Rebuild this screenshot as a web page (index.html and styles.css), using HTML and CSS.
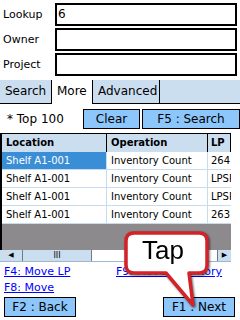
FILE: index.html
```html
<!DOCTYPE html>
<html lang="en">
<head>
    <meta charset="UTF-8">
    <meta name="viewport" content="width=device-width, initial-scale=1.0">
    <title>Lookup - More</title>
    <link rel="stylesheet" href="styles.css">
</head>
<body>
    <div class="screen">
        <div class="fields">
            <label>Lookup</label><div class="box">6</div>
            <label>Owner</label><div class="box"></div>
            <label>Project</label><div class="box"></div>
        </div>

        <div class="tabs">
            <div class="tab t-search">Search</div>
            <div class="tab t-more active">More</div>
            <div class="tab t-adv">Advanced</div>
            <div class="tab-fill"></div>
        </div>

        <div class="toolbar">
            <span class="top">* Top 100</span>
            <button class="btn clear">Clear</button>
            <button class="btn search">F5 : Search</button>
        </div>

        <div class="list">
            <div class="row head">
                <div class="c loc">Location</div>
                <div class="c op">Operation</div>
                <div class="c lp">LP</div>
            </div>
            <div class="row">
                <div class="c loc sel">Shelf A1-001</div>
                <div class="c op">Inventory Count</div>
                <div class="c lp">264</div>
            </div>
            <div class="row">
                <div class="c loc">Shelf A1-001</div>
                <div class="c op">Inventory Count</div>
                <div class="c lp">LPSP1</div>
            </div>
            <div class="row">
                <div class="c loc">Shelf A1-001</div>
                <div class="c op">Inventory Count</div>
                <div class="c lp">LPSP0</div>
            </div>
            <div class="row">
                <div class="c loc">Shelf A1-001</div>
                <div class="c op">Inventory Count</div>
                <div class="c lp">263</div>
            </div>
            <div class="empty"></div>
        </div>
        <div class="hscroll">
            <div class="arrow left">&#9664;</div>
            <div class="thumb">III</div>
            <div class="track"></div>
            <div class="arrow right">&#9654;</div>
        </div>

        <div class="links">
            <a href="#">F4: Move LP</a>
            <a href="#">F9: Move Inventory</a>
            <a href="#">F8: Move</a>
        </div>

        <div class="footer">
            <button class="btn nav">F2 : Back</button>
            <button class="btn nav">F1 : Next</button>
        </div>

        <!-- tap hint bubble over the footer -->
        <svg class="callout" width="100" height="85" viewBox="0 0 100 85">
            <path d="M14,5 H79 Q87,5 87,13 V37 Q87,45 79,45 H69 L73,77 L46,45 H14 Q6,45 6,37 V13 Q6,5 14,5 Z"
                  fill="#fff" stroke="#d2232a" stroke-width="3.5" stroke-linejoin="round"/>
            <text x="22" y="31" font-family="Liberation Sans, Arial, sans-serif" font-size="26">Tap</text>
        </svg>
    </div>
</body>
</html>
```

FILE: styles.css
```css
* { box-sizing: border-box; }
body { margin: 0; font-family: "DejaVu Sans", Verdana, sans-serif; font-size: 12px; color: #000; background: #fff; }
.screen { position: relative; width: 240px; height: 320px; overflow: hidden; }

.fields { display: grid; grid-template-columns: 55px 182px; row-gap: 2px; padding-top: 3px; }
.fields label { padding-left: 3px; align-self: center; font-size: 11px; }
.box { height: 23px; border: 2px solid #000; padding: 0 1px; line-height: 19px; }

.tabs { display: flex; height: 24px; margin-top: 4px; }
.tab { background: #cbdef0; border-right: 1px solid #000; border-bottom: 1px solid #000; padding-left: 5px; line-height: 23px; }
.tab.active { background: #fff; border-bottom: none; }
.t-search { width: 52px; }
.t-more { width: 41px; }
.t-adv { width: 67px; }
.tab-fill { flex: 1; background: #cbdef0; border-bottom: 1px solid #000; }

.toolbar { display: flex; height: 29px; padding-top: 5px; align-items: flex-start; }
.top { width: 83px; padding-left: 7px; line-height: 20px; }
.btn { height: 20px; background: #8cc6fa; border: 1px solid #000; font-family: inherit; font-size: 12px; padding: 0; color: #000; }
.clear { width: 57px; margin-right: 2px; }
.search { width: 98px; }

.list { width: 231px; border-top: 1px solid #000; border-left: 2px solid #000; font-size: 10px; }
.row { display: flex; height: 18px; border-bottom: 1px solid #c8dcf0; line-height: 17px; }
.c { padding-left: 4px; border-right: 1px solid #c8dcf0; white-space: nowrap; overflow: hidden; }
.loc { width: 105px; }
.op { width: 101px; }
.lp { flex: 1; border-right: none; padding-left: 3px; }
.head { background: #cbdef0; font-weight: bold; border-bottom: none; }
.head .c { border-right-color: #000; }
.head .lp { border-right: 1px solid #000; }
.sel { background: #3a8ed6; color: #fff; }
.empty { height: 26px; background: #8c8a8c; }

.hscroll { display: flex; width: 231px; height: 12px; background: #cbdef0; border-bottom: 1px solid #9fb6cc; font-size: 7px; line-height: 11px; }
.arrow { width: 23px; text-align: center; }
.arrow.left { border-right: 1px solid #6a7c8e; }
.arrow.right { width: 14px; border-left: 1px solid #6a7c8e; }
.thumb { width: 69px; text-align: center; border-right: 1px solid #6a7c8e; font-size: 8px; }
.track { flex: 1; background: #fff; }

.links { display: grid; grid-template-columns: 112px 1fr; padding: 2px 0 0 4px; font-size: 11px; line-height: 16px; }
.links a { color: #0000ff; }

.footer { display: flex; justify-content: space-between; padding: 1px 5px 0 4px; }
.nav { width: 72px; }

.callout { position: absolute; left: 120px; top: 228px; filter: drop-shadow(1px 1px 1px rgba(0, 0, 0, 0.6)); }
```
